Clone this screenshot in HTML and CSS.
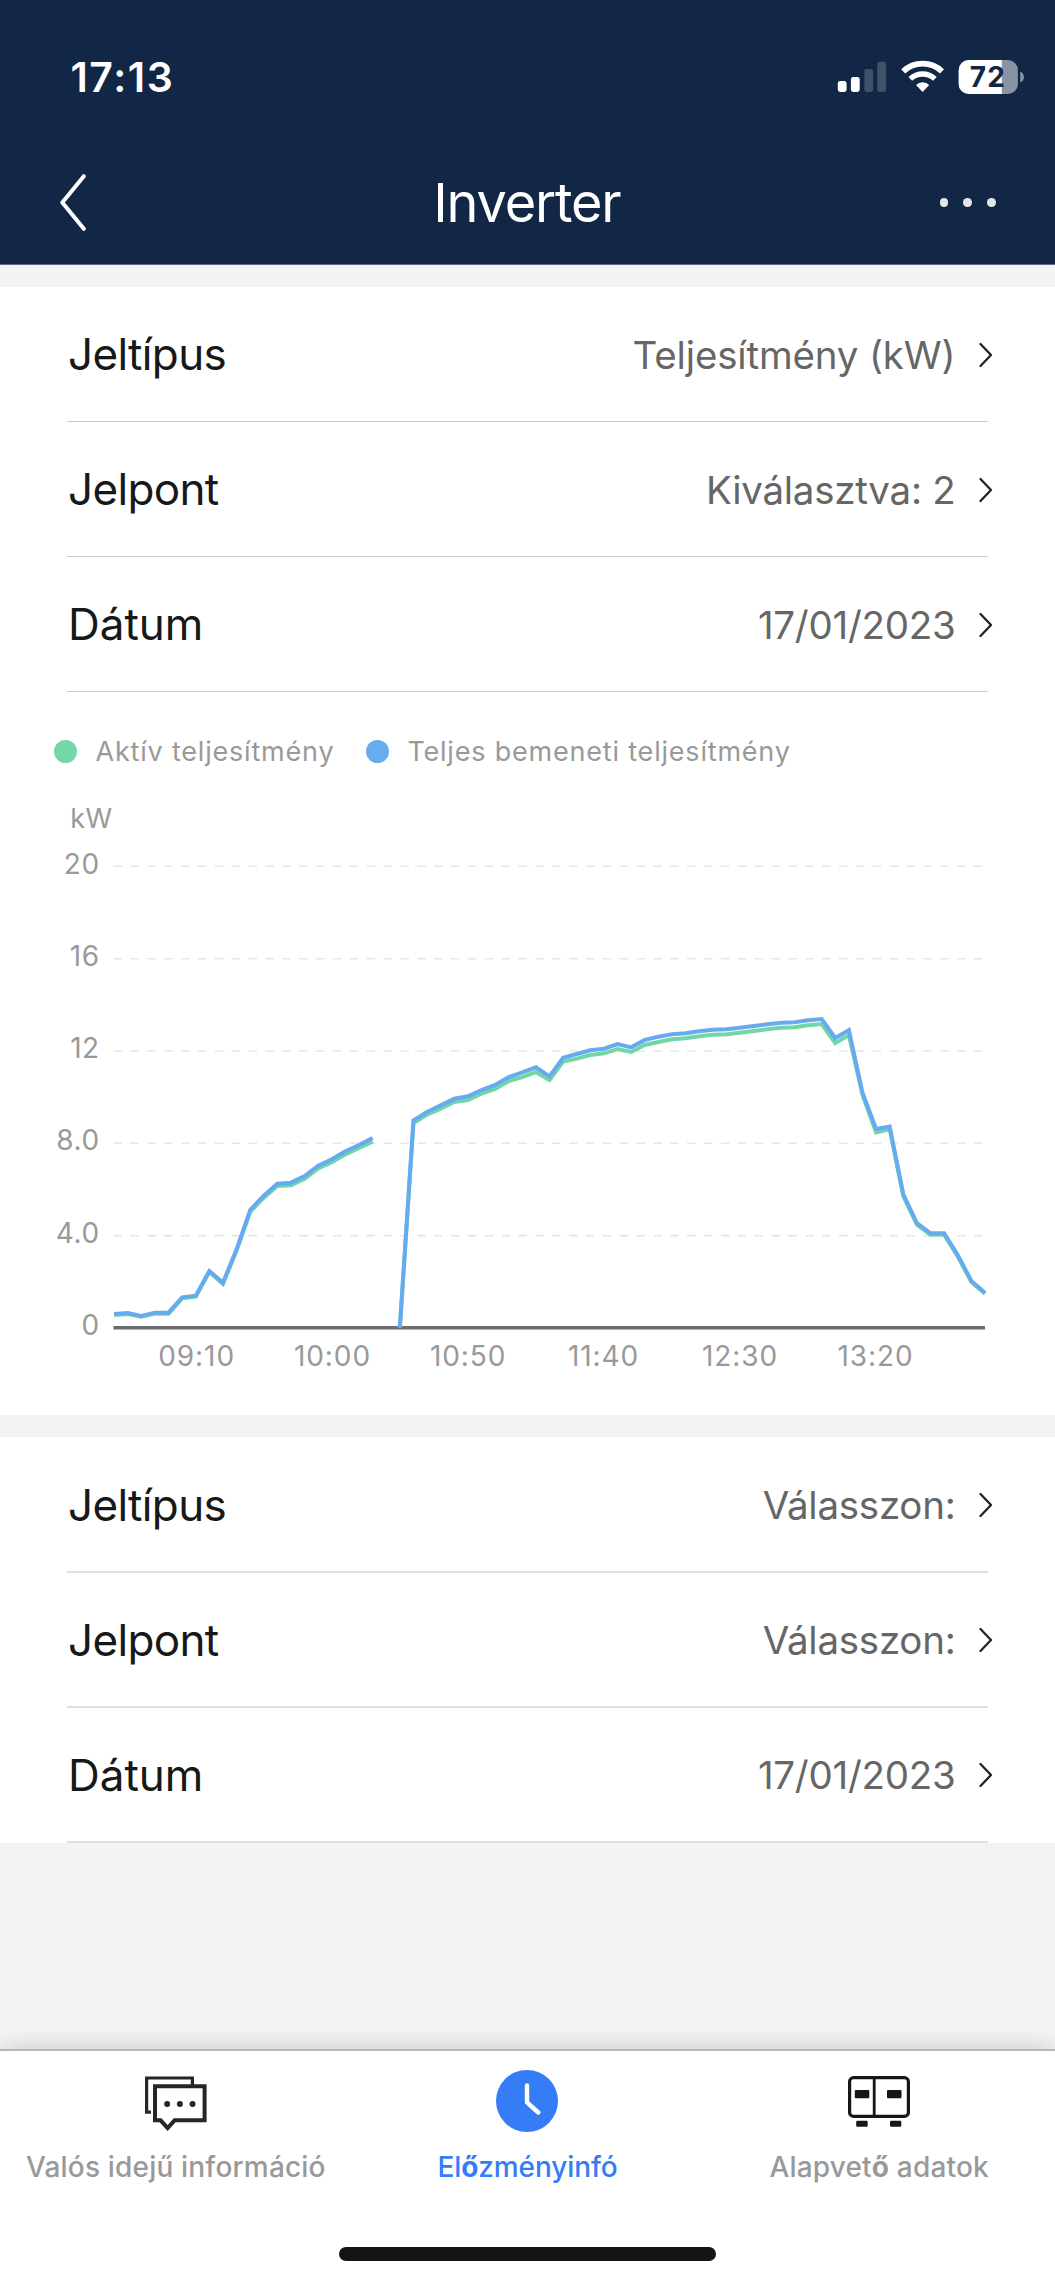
FILE: index.html
```html
<!DOCTYPE html>
<html lang="hu">
<head>
<meta charset="utf-8">
<meta name="viewport" content="width=device-width">
<title>Inverter</title>
<link rel="stylesheet" href="styles.css">
</head>
<body>
<svg class="sprite" aria-hidden="true">
  <symbol id="chevron" viewBox="0 0 14 26"><path d="M1.5 2 12 13 1.5 24" fill="none" stroke="#222" stroke-width="2.3" stroke-linecap="round" stroke-linejoin="round"/></symbol>
</svg>
<div class="screen">
  <header class="header">
    <div class="status">
      <span class="clock">17:13</span>
      <svg class="indicators" viewBox="0 0 188 34">
        <g fill="#fff">
          <rect x="0.8" y="21" width="8.8" height="11" rx="2.4"/>
          <rect x="13.9" y="17" width="8.8" height="15" rx="2.4"/>
          <rect x="27.3" y="9" width="8.8" height="23" rx="2.4" opacity=".2"/>
          <rect x="40.3" y="1.7" width="8.8" height="30.3" rx="2.4" opacity=".2"/>
          <path d="M85.6 32 79 24.9a9.8 9.8 0 0 1 13.2 0z"/>
        </g>
        <g fill="none" stroke="#fff">
          <path d="M66.2 11.3a28.3 28.3 0 0 1 38.8 0" stroke-width="5.8"/>
          <path d="M73.3 18.9a18 18 0 0 1 24.6 0" stroke-width="5.4"/>
        </g>
        <clipPath id="level"><rect x="121" y="0" width="43.8" height="34"/></clipPath>
        <rect x="121.7" y="0" width="59.2" height="34" rx="10" fill="#8893a4"/>
        <rect x="121.7" y="0" width="59.2" height="34" rx="10" fill="#fff" clip-path="url(#level)"/>
        <path d="M183.2 11.7c5 1.6 5 9 0 10.6z" fill="#8893a4"/>
        <text class="charge" x="132.8" y="27.2">72</text>
      </svg>
    </div>
    <nav class="navbar">
      <div class="nav-side">
        <svg class="back" viewBox="0 0 26 57"><path d="M23.8 2.2 2.3 28.5 23.8 54.8" fill="none" stroke="#fff" stroke-width="4" stroke-linecap="round" stroke-linejoin="round"/></svg>
      </div>
      <h1 class="title">Inverter</h1>
      <div class="nav-side nav-more"><i></i><i></i><i></i></div>
    </nav>
  </header>

  <main class="content">
    <section class="card">
      <div class="row"><span class="label jel">Jeltípus</span><span class="value power">Teljesítmény (kW)</span><svg class="go"><use href="#chevron"/></svg></div>
      <div class="row"><span class="label jel">Jelpont</span><span class="value">Kiválasztva: 2</span><svg class="go"><use href="#chevron"/></svg></div>
      <div class="row"><span class="label">Dátum</span><span class="value">17/01/2023</span><svg class="go"><use href="#chevron"/></svg></div>
      <div class="legend">
        <span class="series"><i class="dot active"></i>Aktív teljesítmény</span>
        <span class="series"><i class="dot total"></i>Teljes bemeneti teljesítmény</span>
      </div>
      <svg class="chart" viewBox="0 -20 1055 625">
        <g class="grid">
          <path d="M113.5 56.3H985M113.5 148.7H985M113.5 241H985M113.5 333.3H985M113.5 425.6H985"/>
        </g>
        <g class="axis-text ticks">
          <text x="99.8" y="63.7">20</text>
          <text x="99.8" y="155.8">16</text>
          <text x="99.8" y="248">12</text>
          <text x="99.8" y="340.4">8.0</text>
          <text x="99.8" y="432.8">4.0</text>
          <text x="99.8" y="525.2">0</text>
        </g>
        <g class="axis-text">
          <text class="unit" x="70.2" y="18.2">kW</text>
          <text x="158.3" y="556.2">09:10</text>
          <text x="294" y="556.2">10:00</text>
          <text x="430" y="556.2">10:50</text>
          <text x="568" y="556.2">11:40</text>
          <text x="702" y="556.2">12:30</text>
          <text x="837.5" y="556.2">13:20</text>
        </g>
        <path d="M113.5 517.7H985" stroke="#6e6e70" stroke-width="3.4"/>
        <!-- one x unit is a five-minute sample -->
        <g transform="translate(114.1 190) scale(13.607 .33333)">
          <polyline class="line line-active" points="0,945 1,942 2,950 3,941 4,941 5,895 6,890 7,816 8,852 9,752 10,636 11,593 12,558 13,556 14,536 15,505 16,487 17,463 18,444 19,425"/>
          <polyline class="line line-active" points="21,983 22,369 23,344 24,326 25,306 26,300 27,281 28,267 29,243 30,231 31,216 32,240 33,185 34,176 35,165 36,160 37,147 38,156 39,135 40,126 41,118 42,115 43,109 44,104 45,103 46,98 47,93 48,88 49,83 50,82 51,76 52,72 53,129 54,105 55,285 56,397 57,388 58,588 59,674 60,704 61,704 62,769 63,846 64,881"/>
          <polyline class="line line-total" points="0,942 1,939 2,948 3,938 4,938 5,892 6,887 7,813 8,848 9,748 10,630 11,587 12,551 13,548 14,528 15,497 16,478 17,454 18,435 19,414"/>
          <polyline class="line line-total" points="21,983 22,361 23,336 24,316 25,296 26,289 27,270 28,255 29,231 30,217 31,202 32,229 33,173 34,162 35,151 36,146 37,132 38,142 39,120 40,110 41,103 42,100 43,94 44,89 45,88 46,83 47,78 48,73 49,68 50,67 51,61 52,57 53,114 54,90 55,278 56,387 57,380 58,583 59,669 60,700 61,700 62,765 63,843 64,878"/>
        </g>
      </svg>
    </section>

    <section class="card second">
      <div class="row"><span class="label jel">Jeltípus</span><span class="value">Válasszon:</span><svg class="go"><use href="#chevron"/></svg></div>
      <div class="row"><span class="label jel">Jelpont</span><span class="value">Válasszon:</span><svg class="go"><use href="#chevron"/></svg></div>
      <div class="row"><span class="label">Dátum</span><span class="value">17/01/2023</span><svg class="go"><use href="#chevron"/></svg></div>
    </section>
  </main>

  <footer class="tabbar">
    <div class="tabs">
      <div class="tab">
        <svg class="tab-icon" viewBox="0 0 62 62" fill="none" stroke="#262626">
          <path d="M6 42.2H1.6V8H47.4V15" stroke-width="3.2"/>
          <path d="M10 16.3H59.6V50.3H29.6L22.6 58 15.6 50.3H10Z" stroke-width="4"/>
          <g fill="#262626" stroke="none"><circle cx="22.2" cy="34" r="3"/><circle cx="34.9" cy="34" r="3"/><circle cx="47.5" cy="34" r="3"/></g>
        </svg>
        <span class="tab-label">Valós idejű információ</span>
      </div>
      <div class="tab current">
        <svg class="tab-icon" viewBox="0 0 62 62">
          <circle cx="31" cy="31" r="31" fill="#357cf7"/>
          <path d="M31 15.5V32.3L42.3 42.5" fill="none" stroke="#fff" stroke-width="4.4" stroke-linecap="round" stroke-linejoin="round"/>
        </svg>
        <span class="tab-label">El<b>ő</b>zményinfó</span>
      </div>
      <div class="tab">
        <svg class="tab-icon" viewBox="0 0 62 62" fill="#161616">
          <g fill="none" stroke="#161616" stroke-width="3.2"><rect x="1.6" y="7.6" width="58.8" height="38.8" rx="4"/><path d="M26.2 7.6V46.4" stroke-width="2.8"/></g>
          <rect x="6.8" y="20" width="14.5" height="8.3" rx="1"/><rect x="39" y="20" width="14.5" height="8.3" rx="1"/>
          <rect x="8.2" y="50.7" width="11.5" height="6" rx="1.2"/><rect x="42" y="50.7" width="11.3" height="6" rx="1.2"/>
        </svg>
        <span class="tab-label">Alapvet<b>ő</b> adatok</span>
      </div>
    </div>
    <div class="home-indicator"></div>
  </footer>
</div>
</body>
</html>
```
FILE: styles.css
```css
* { box-sizing: border-box; }

body {
  margin: 0;
  background: #f1f3f5;
  font-family: Inter, "Liberation Sans", sans-serif;
}

.sprite { display: block; width: 0; height: 0; }

.screen {
  display: flex;
  flex-direction: column;
  width: 1055px;
  height: 2284px;
  overflow: hidden;
}

/* Header */
.header {
  flex: none;
  height: 265px;
  background: #112745;
  border-bottom: 1px solid #5f6c80;
  color: #fff;
}

.status {
  display: flex;
  align-items: center;
  justify-content: space-between;
  height: 154px;
  padding: 0 30.4px 0 70.4px;
}

.clock {
  font-size: 41px;
  font-weight: 600;
  letter-spacing: 1.6px;
}

.indicators { width: 188px; height: 34px; }

.charge {
  fill: #112745;
  font-size: 28px;
  font-weight: 700;
  letter-spacing: 1.2px;
}

.navbar {
  display: flex;
  align-items: center;
  height: 97px;
  padding: 0 59px 0 59.6px;
}

.nav-side { display: flex; flex: 1; }

.back { width: 26px; height: 57px; }

.title {
  margin: 0 1px 0 -1px;
  font-size: 54px;
  font-weight: 400;
  letter-spacing: -1.18px;
}

.nav-more { justify-content: flex-end; gap: 15.2px; }

.nav-more i {
  width: 8.7px;
  height: 8.7px;
  border-radius: 50%;
  background: #e6e6e6;
}

/* Cards */
.content {
  display: flex;
  flex: 1;
  flex-direction: column;
  gap: 22px;
  padding-top: 22px;
}

.card { background: #fff; }

.row {
  display: flex;
  align-items: center;
  height: 135px;
  margin: 0 67px;
  border-bottom: 1px solid #c9c9c9;
}

.second { padding-top: 1px; }
.second .row { border-bottom: 2px solid #dedfe0; }

.label {
  flex: 1;
  padding-left: 1px;
  color: #171818;
  font-size: 44px;
}

.jel { letter-spacing: -0.65px; }

.value {
  padding-top: 1px;
  margin-right: 23.5px;
  color: #666;
  font-size: 38.5px;
  letter-spacing: -0.26px;
}

.power { letter-spacing: -0.16px; }

.go {
  width: 14px;
  height: 26px;
  margin: 2px -5px 0 0;
}

.second .go { margin-top: 1px; }

/* Chart */
.legend {
  display: flex;
  align-items: center;
  gap: 31.5px;
  height: 118px;
  padding-left: 54px;
}

.series {
  display: flex;
  align-items: center;
  gap: 18.5px;
  color: #999;
  font-size: 27px;
  letter-spacing: 0.8px;
}

.dot { width: 23px; height: 23px; border-radius: 50%; }
.dot.active { background: #73d7aa; }
.dot.total { background: #68abef; }

/* the plot's top band holds the unit and reaches up under the legend */
.chart { display: block; width: 1055px; height: 625px; margin-top: -20px; }

.grid {
  fill: none;
  stroke: #e6e6e6;
  stroke-width: 1.6;
  stroke-dasharray: 8.6 8.27;
}

.axis-text {
  fill: #999;
  font-size: 28px;
  letter-spacing: 0.9px;
}

.ticks { text-anchor: end; letter-spacing: 0.6px; }
.unit { font-size: 27px; letter-spacing: 0.5px; }

.line { fill: none; stroke-width: 4; vector-effect: non-scaling-stroke; }
.line-active { stroke: #70d6a8; }
.line-total { stroke: #66aaef; }

/* Tab bar */
.tabbar {
  display: flex;
  flex: none;
  flex-direction: column;
  align-items: center;
  height: 235px;
  border-top: 2px solid #b6b7ba;
  background: #fff;
  box-shadow: 0 -1px 24px -2px rgba(0, 0, 0, 0.2);
}

.tabs {
  display: grid;
  grid-template-columns: repeat(3, 1fr);
  width: 100%;
  padding-top: 19px;
}

.tab {
  display: flex;
  flex-direction: column;
  align-items: center;
  gap: 14px;
  color: #999;
}

.tab-icon { width: 62px; height: 62px; }

.tab-label {
  font-size: 28px;
  font-weight: 450;
  line-height: 42px;
  letter-spacing: 0.18px;
}

.tab-label b { font-weight: 700; }

.current { color: #357cf7; }
.current .tab-label { letter-spacing: -0.1px; }

.home-indicator {
  width: 377px;
  height: 14px;
  margin-top: 59px;
  border-radius: 7px;
  background: #141414;
}
```
